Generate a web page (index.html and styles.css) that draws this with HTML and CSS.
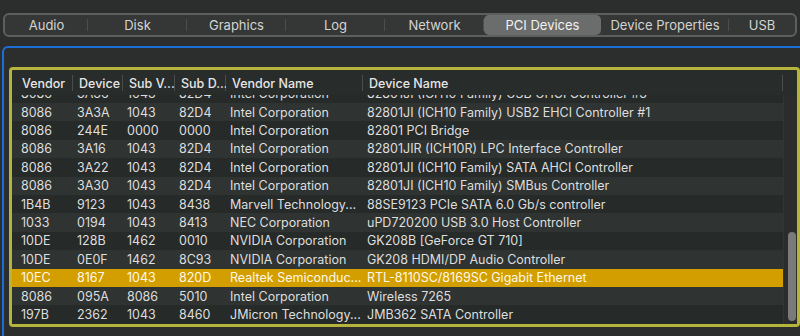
FILE: index.html
```html
<!DOCTYPE html>
<html lang="en">
<head>
    <meta charset="UTF-8">
    <title>PCI Devices</title>

    <link rel="stylesheet" href="styles.css">
</head>
<body>

    <nav class="tabs">
        <div class="tab tab-audio">Audio</div>
        <div class="tab">Disk</div>
        <div class="tab">Graphics</div>
        <div class="tab">Log</div>
        <div class="tab">Network</div>
        <div class="tab tab-pci selected">PCI Devices</div>
        <div class="tab tab-props">Device Properties</div>
        <div class="tab tab-usb">USB</div>
    </nav>

    <main class="pane">
        <div class="panel">

            <div class="thead">
                <div class="th">Vendor</div>
                <div class="th">Device</div>
                <div class="th">Sub V...</div>
                <div class="th">Sub D...</div>
                <div class="th">Vendor Name</div>
                <div class="th">Device Name</div>
                <div class="th-blank"></div>
            </div>

            <div class="tbody">
                <div class="rows">
                    <div class="rows-inner">
                        <div class="row odd">
                            <span>8086</span><span>3A36</span><span>1043</span><span>82D4</span>
                            <span>Intel Corporation</span><span>82801JI (ICH10 Family) USB UHCI Controller #3</span>
                        </div>
                        <div class="row">
                            <span>8086</span><span>3A3A</span><span>1043</span><span>82D4</span>
                            <span>Intel Corporation</span><span>82801JI (ICH10 Family) USB2 EHCI Controller #1</span>
                        </div>
                        <div class="row odd">
                            <span>8086</span><span>244E</span><span>0000</span><span>0000</span>
                            <span>Intel Corporation</span><span>82801 PCI Bridge</span>
                        </div>
                        <div class="row">
                            <span>8086</span><span>3A16</span><span>1043</span><span>82D4</span>
                            <span>Intel Corporation</span><span>82801JIR (ICH10R) LPC Interface Controller</span>
                        </div>
                        <div class="row odd">
                            <span>8086</span><span>3A22</span><span>1043</span><span>82D4</span>
                            <span>Intel Corporation</span><span>82801JI (ICH10 Family) SATA AHCI Controller</span>
                        </div>
                        <div class="row">
                            <span>8086</span><span>3A30</span><span>1043</span><span>82D4</span>
                            <span>Intel Corporation</span><span>82801JI (ICH10 Family) SMBus Controller</span>
                        </div>
                        <div class="row odd">
                            <span>1B4B</span><span>9123</span><span>1043</span><span>8438</span>
                            <span>Marvell Technology...</span><span>88SE9123 PCIe SATA 6.0 Gb/s controller</span>
                        </div>
                        <div class="row">
                            <span>1033</span><span>0194</span><span>1043</span><span>8413</span>
                            <span>NEC Corporation</span><span>uPD720200 USB 3.0 Host Controller</span>
                        </div>
                        <div class="row odd">
                            <span>10DE</span><span>128B</span><span>1462</span><span>0010</span>
                            <span>NVIDIA Corporation</span><span>GK208B [GeForce GT 710]</span>
                        </div>
                        <div class="row">
                            <span>10DE</span><span>0E0F</span><span>1462</span><span>8C93</span>
                            <span>NVIDIA Corporation</span><span>GK208 HDMI/DP Audio Controller</span>
                        </div>
                        <div class="row active">
                            <span>10EC</span><span>8167</span><span>1043</span><span>820D</span>
                            <span>Realtek Semiconduc...</span><span>RTL-8110SC/8169SC Gigabit Ethernet</span>
                        </div>
                        <div class="row">
                            <span>8086</span><span>095A</span><span>8086</span><span>5010</span>
                            <span>Intel Corporation</span><span>Wireless 7265</span>
                        </div>
                        <div class="row odd">
                            <span>197B</span><span>2362</span><span>1043</span><span>8460</span>
                            <span>JMicron Technology...</span><span>JMB362 SATA Controller</span>
                        </div>
                    </div>
                </div>
                <div class="scrollbar">
                    <div class="thumb"></div>
                </div>
            </div>

        </div>
    </main>

</body>
</html>
```

FILE: styles.css
```css
body {
    margin: 0;
    padding: 0;
    width: 800px;
    height: 336px;
    overflow: hidden;
    background: #2b2e2d;
    font-family: "Inter", "Liberation Sans", sans-serif;
    font-size: 12.5px;
    color: #dedede;
}

/* segmented tab bar */
.tabs {
    display: flex;
    height: 18px;
    margin: 13px 3px 0 3px;
    padding: 1px 0;
    border: 2px solid #5c5f5e;
    border-radius: 6px;
    background: #343736;
}

.tab {
    width: 99px;
    display: flex;
    align-items: center;
    justify-content: center;
    color: #d4d4d4;
    font-size: 13px;
    background: linear-gradient(#4b4e4d, #4b4e4d) right center / 1px 12px no-repeat;
}

.tab-audio { width: 83px; }
.tab-pci { width: 117px; }
.tab-props { width: 128px; }
.tab-usb { flex: 1; background: none; }

.tab.selected {
    background: #6a6d6c;
    border-radius: 5px;
    color: #f2f2f2;
    margin: -1px 0;
}

/* blue focus pane */
.pane {
    margin: 9px 0 0 2px;
    height: 271px;
    padding: 19px 0 0 5px;
    border: 2px solid #1d6fd8;
    border-right: none;
    border-bottom: none;
    border-radius: 6px 0 0 0;
}

/* yellow table frame */
.panel {
    width: 785px;
    height: 254px;
    border: 3px solid #b7b43c;
    border-radius: 4px;
    background: #282c2b;
    display: flex;
    flex-direction: column;
}

.thead {
    display: grid;
    grid-template-columns: 61px 50px 52px 51px 137px 420px 14px;
    height: 25px;
    flex: none;
}

.th {
    display: flex;
    align-items: center;
    padding: 2px 0 0 6px;
    font-weight: 500;
    color: #e6e6e6;
    white-space: nowrap;
    overflow: hidden;
    background: linear-gradient(#4a4d4c, #4a4d4c) right center / 1px 16px no-repeat;
}

.th:first-child { padding-left: 10px; }

.tbody {
    display: flex;
    flex: 1;
    min-height: 0;
}

.rows {
    flex: 1;
    overflow: hidden;
}

.rows-inner {
    margin-top: -10.4px;
}

.row {
    display: grid;
    grid-template-columns: 61px 50px 52px 51px 137px 420px;
    height: 18.4px;
    align-items: center;
    background: #2f3332;
    white-space: nowrap;
}

.row.odd { background: #262a29; }

.row.active {
    background: #d39f00;
    color: #fff8e8;
}

.row span {
    padding-left: 4px;
    overflow: hidden;
}

.row span:first-child { padding-left: 9px; }

.scrollbar {
    width: 14px;
    background: #2b2c2c;
    border-left: 1px solid #333535;
    box-sizing: border-box;
    padding: 137px 0 0 4px;
}

.thumb {
    width: 8px;
    height: 89px;
    border-radius: 5px;
    background: #7a7a7a;
}
```
